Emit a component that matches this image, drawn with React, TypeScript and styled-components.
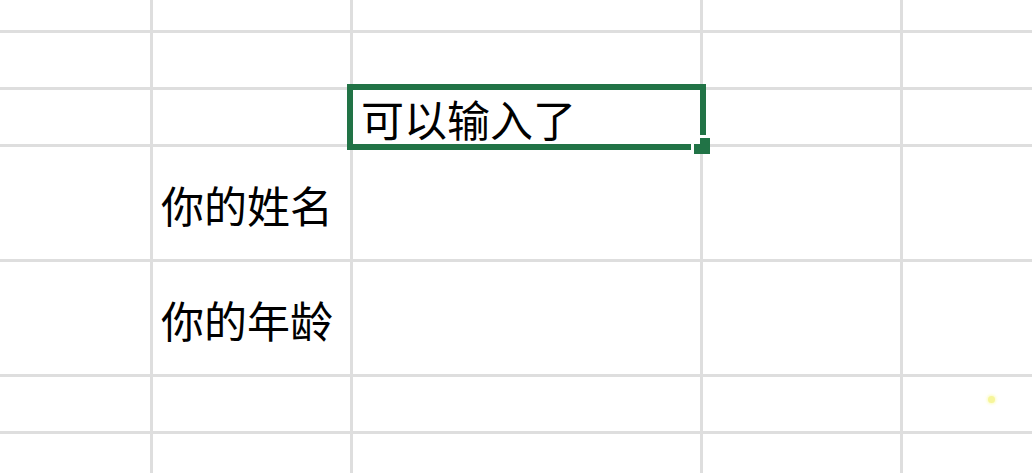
import React from "react";
import styled, { createGlobalStyle } from "styled-components";

const Global = createGlobalStyle`
  html, body { margin: 0; padding: 0; background: #ffffff; }
  body { font-family: "Noto Sans CJK SC", "Noto Sans", sans-serif; }
`;

const Sheet = styled.div`
  width: 1032px;
  height: 473px;
  overflow: hidden;
  display: grid;
  grid-template-columns: 150px 197px 347px 197px 1fr;
  grid-template-rows: 30px 54px 54px 112px 112px 54px 1fr;
  gap: 3px;
  background: #dedede;
`;

const Cell = styled.div<{ $selected?: boolean }>`
  position: relative;
  background: #ffffff;
  display: flex;
  align-items: center;
  padding: 2px 0 0 8px;
  box-sizing: border-box;
  min-width: 0;
  font-family: "Noto Sans CJK SC", sans-serif;
  font-size: 43px;
  line-height: 1;
  color: #000000;
  white-space: nowrap;
  overflow: visible;
`;

const Selection = styled.div`
  position: absolute;
  inset: -6px;
  border: 6px solid #217346;
  pointer-events: none;
  z-index: 2;
`;

const FillHandle = styled.div`
  position: absolute;
  right: -10px;
  bottom: -10px;
  width: 19px;
  height: 19px;
  box-sizing: border-box;
  background: #217346;
  border-left: 3px solid #ffffff;
  border-top: 3px solid #ffffff;
  z-index: 3;
  &::before {
    content: "";
    position: absolute;
    left: 0;
    top: 0;
    width: 6px;
    height: 6px;
    background: #ffffff;
  }
`;

const Spark = styled.div`
  position: absolute;
  left: 85px;
  top: 19px;
  width: 7px;
  height: 7px;
  border-radius: 50%;
  background: #f6f59a;
  box-shadow: 0 0 3px 1px rgba(250, 250, 170, 0.8);
`;

type CellDef = { text?: string; selected?: boolean; spark?: boolean };

const rows: CellDef[][] = [
  [{}, {}, {}, {}, {}],
  [{}, {}, {}, {}, {}],
  [{}, {}, { text: "可以输入了", selected: true }, {}, {}],
  [{}, { text: "你的姓名" }, {}, {}, {}],
  [{}, { text: "你的年龄" }, {}, {}, {}],
  [{}, {}, {}, {}, { spark: true }],
  [{}, {}, {}, {}, {}],
];

export default function App() {
  return (
    <>
      <Global />
      <Sheet>
        {rows.map((row, r) =>
          row.map((c, i) => (
            <Cell key={`${r}-${i}`} $selected={c.selected}>
              {c.text}
              {c.selected && (
                <>
                  <Selection />
                  <FillHandle />
                </>
              )}
              {c.spark && <Spark />}
            </Cell>
          ))
        )}
      </Sheet>
    </>
  );
}
